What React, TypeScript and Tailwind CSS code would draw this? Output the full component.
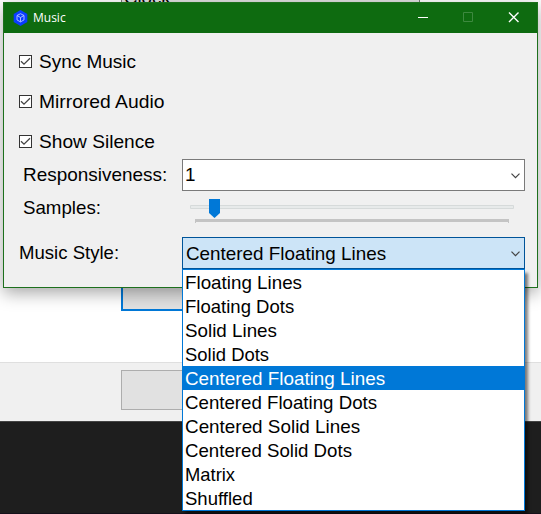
import React from "react";

const STYLES = [
  { name: "Floating Lines", scale: "scale-x-[0.989]" },
  { name: "Floating Dots", scale: "scale-x-[0.976]" },
  { name: "Solid Lines", scale: "scale-x-[0.989]" },
  { name: "Solid Dots", scale: "scale-x-[0.971]" },
  { name: "Centered Floating Lines", scale: "scale-x-[0.992]" },
  { name: "Centered Floating Dots", scale: "scale-x-[0.983]" },
  { name: "Centered Solid Lines", scale: "scale-x-[0.993]" },
  { name: "Centered Solid Dots", scale: "scale-x-[0.982]" },
  { name: "Matrix", scale: "scale-x-[0.968]" },
  { name: "Shuffled", scale: "scale-x-[0.976]" },
];

function Label({ text, scale }: { text: string; scale: string }) {
  return <span className={`block h-6 w-max origin-left text-[19px] leading-[25px] whitespace-nowrap ${scale}`}>{text}</span>;
}

function Check({ text, scale }: { text: string; scale: string }) {
  return (
    <label className="flex h-6 items-start">
      <span className="mt-[6px] mr-[7px] h-[13px] w-[13px] border border-[#333] bg-white">
        <svg width="11" height="11" viewBox="0 0 11 11" fill="none" stroke="#444" strokeWidth="1.3">
          <path d="M1 5.2 4 8.2 10 2.2" />
        </svg>
      </span>
      <Label text={text} scale={scale} />
    </label>
  );
}

function Chevron() {
  return (
    <svg className="mt-px mr-[4px]" width="9" height="6" viewBox="0 0 9 6" fill="none" stroke="#444" strokeWidth="1.2">
      <path d="M0.5 0.7 4.5 4.7 8.5 0.7" />
    </svg>
  );
}

function Backdrop() {
  return (
    <div className="flex h-[514px] flex-col overflow-hidden bg-[#1e1e1e]">
      <div className="flex h-[362px] flex-col bg-white pl-[121px]">
        <div className="h-[10px] w-[299px] border-x border-[#777] bg-[#e1e1e1] pl-[2px]">
          <div className="-mt-[15px]">
            <Label text="Clock" scale="scale-x-[0.98]" />
          </div>
        </div>
        <div className="mt-[261px] h-10 w-[299px] border-2 border-[#0078d7] bg-[#e1e1e1]" />
      </div>
      <div className="h-[60px] border-t border-b border-t-[#dfdfdf] border-b-[#444] bg-[#f0f0f0] pt-[7px] pl-[121px]">
        <div className="h-10 w-[299px] border border-[#adadad] bg-[#e1e1e1]" />
      </div>
      <div className="mt-auto h-px bg-[#15101a]" />
    </div>
  );
}

export default function App() {
  return (
    <div className="relative h-[514px] w-[541px] overflow-hidden font-['Liberation_Sans',Arial,sans-serif] text-black">
      <Backdrop />
      <section className="absolute top-[2px] left-[3px] flex h-[286px] w-[535px] flex-col border border-[#1d701d] bg-[#f0f0f0] shadow-[0_5px_16px_rgba(0,0,0,0.35)]">
        <header className="flex h-[30px] items-center bg-[#0e6b10] text-white">
          <svg className="ml-[9px]" width="15" height="16" viewBox="0 0 15 16">
            <path d="M7.5 0 14.3 4v8L7.5 16 .7 12V4Z" fill="#0a3cff" />
            <path d="M7.5 3.7 11 5.5v4.4l-3.5 2-3.5-2V5.5ZM4 5.5l3.5 2L11 5.5M7.5 7.5v4.3" fill="none" stroke="#b9c9ff" strokeWidth="0.9" />
          </svg>
          <span className="ml-[5px] font-['Open_Sans',sans-serif] text-[12px]">Music</span>
          <svg className="mr-[13px] ml-auto" width="106" height="12" viewBox="0 0 106 12" fill="none">
            <path d="M0 5.5h10" stroke="#fff" />
            <path d="M45.5 .5h9v9h-9Z" stroke="#3d893f" />
            <path d="m91 .5 9.5 9.5M100.5 .5 91 10" stroke="#fff" strokeWidth="1.4" />
          </svg>
        </header>
        <div className="flex flex-col gap-4 pt-4 pl-[15px]">
          <Check text="Sync Music" scale="scale-x-[0.999]" />
          <Check text="Mirrored Audio" scale="scale-x-[1.015]" />
          <Check text="Show Silence" scale="scale-x-[1.007]" />
        </div>
        <div className="mt-[6px] flex h-8 items-center pl-[19px]">
          <div className="mb-[2px] w-[159px]"><Label text="Responsiveness:" scale="scale-x-[0.997]" /></div>
          <div className="flex h-8 w-[343px] items-center justify-between border border-[#7a7a7a] bg-white pl-[2px]">
            <div className="mb-[2px]"><Label text="1" scale="scale-x-[0.99]" /></div>
            <Chevron />
          </div>
        </div>
        <div className="flex h-8 items-center pl-[19px]">
          <div className="w-[159px]"><Label text="Samples:" scale="scale-x-[0.984]" /></div>
          <svg width="343" height="32" viewBox="0 0 343 32">
            <path d="M8.5 14.5h323v3h-323Z" fill="#e7eaea" stroke="#d6dada" />
            <path d="M13 28h314v4h-1v-1H14v1h-1Z" fill="#c4c4c4" />
            <path d="M27 8h11v14l-5.5 5L27 22Z" fill="#0078d7" />
          </svg>
        </div>
        <div className="mt-[14px] flex h-8 items-center pl-[15px]">
          <div className="mb-[2px] w-[163px]"><Label text="Music Style:" scale="scale-x-[0.977]" /></div>
          <div className="relative flex h-8 w-[343px] items-center justify-between border border-[#005499] bg-[#cce4f7] pl-[3px]">
            <Label text="Centered Floating Lines" scale="scale-x-[0.992]" />
            <Chevron />
            <div className="absolute top-[31px] -left-px h-[242px] w-[343px] border border-[#0078d7] bg-white shadow-[3px_4px_3px_rgba(0,0,0,0.5)]">
              {STYLES.map((s, i) => (
                <div key={s.name} className={i === 4 ? "h-6 bg-[#0078d7] pl-[2px] text-white" : "h-6 pl-[2px]"}>
                  <Label text={s.name} scale={s.scale} />
                </div>
              ))}
            </div>
          </div>
        </div>
      </section>
    </div>
  );
}
